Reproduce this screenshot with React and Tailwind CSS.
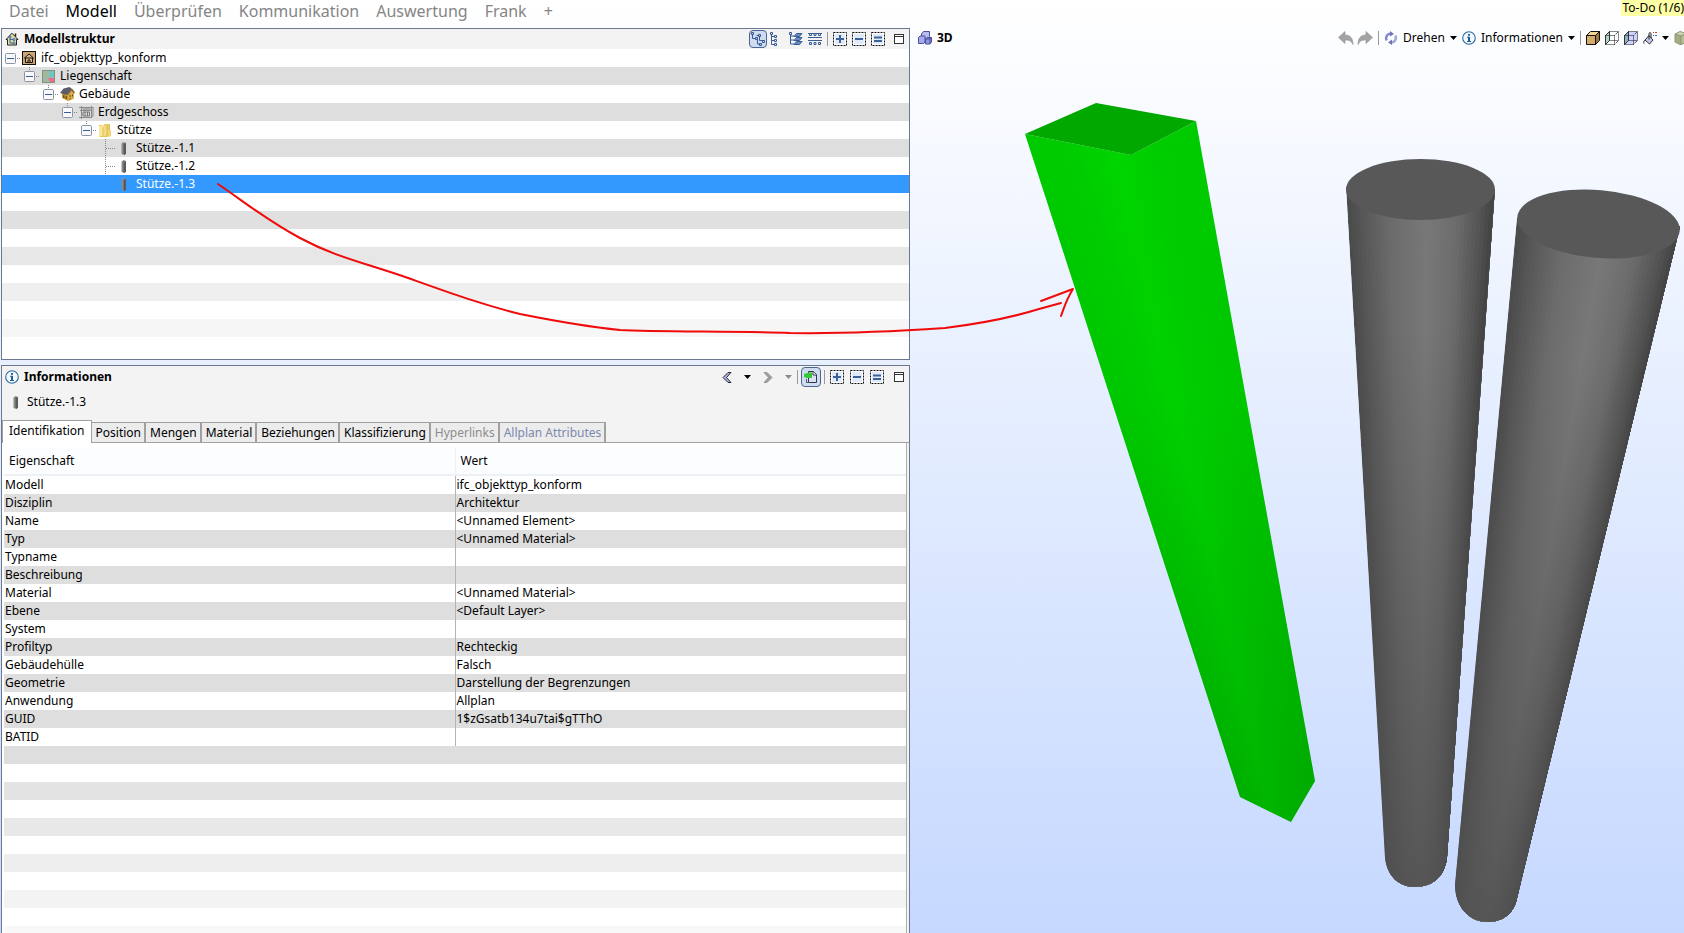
import React from "react";

const dash = { fill: "none", stroke: "#111", strokeWidth: 1, strokeDasharray: "2 1" };

function Expander() {
  return (
    <svg width="11" height="11" viewBox="0 0 11 11">
      <rect x="0.5" y="0.5" width="10" height="10" rx="1" fill="#f8f9fc" stroke="#8b93a0" />
      <path d="M2 5.5h7" stroke="#3a5a9c" />
    </svg>
  );
}

function HouseTreeIcon() {
  return (
    <svg width="14" height="14" viewBox="0 0 14 14">
      <path d="M1 7.5 7 1.2l6 6.3h-1.5V13h-9V7.500z" fill="#dfe0a0" stroke="#222" />
      <path d="M10.500 1.500v3" stroke="#222" strokeWidth="1.500" />
      <path d="M5 5v6h3M5 7.500h3" fill="none" stroke="#3d5f9c" />
      <path d="M4 4h2v2H4zM8 6.500h2v2H8zM8 10h2v2H8z" fill="#8fa6d6" stroke="#3d5f9c" strokeWidth="0.600" />
    </svg>
  );
}

function ProjectIcon() {
  return (
    <svg width="14" height="14" viewBox="0 0 14 14">
      <rect x="0.500" y="0.500" width="13" height="13" fill="#c9a574" stroke="#17120c" />
      <path d="M2.500 7 7 3l4.500 4H10.500v4.500h-7V7z" fill="#d8b98b" stroke="#17120c" />
      <path d="M3.500 7h7M6 11.500V9h2v2.500" fill="none" stroke="#17120c" />
    </svg>
  );
}

function SiteIcon() {
  return (
    <svg width="13" height="13" viewBox="0 0 13 13">
      <rect x="0.500" y="0.500" width="12" height="12" fill="#9fb99b" stroke="#858f86" />
      <rect x="7" y="1" width="5" height="6" fill="#6dc6c2" />
      <path d="M6 8h6v4H8z" fill="#f06c8c" />
      <path d="M1 9h5l2 3" fill="none" stroke="#aab" strokeWidth="0.800" />
    </svg>
  );
}

function BuildingIcon() {
  return (
    <svg width="15" height="14" viewBox="0 0 15 14">
      <path d="M2 5v6l6 3 6-2.500V6l-3-4z" fill="#c79a36" />
      <path d="M8 14V7l3-4 3 3v5.500z" fill="#dcae4c" />
      <path d="M0 6 3.500 1.500 9.500 0l2.500 2-5.500 6z" fill="#5d5b68" />
      <path d="M12 1.500 15 5.500l-1 1-2.500-3L8 8l-1-.5z" fill="#77603a" />
      <path d="M3 8v2.500l1.500.7V8.600zM5.500 9v2.500l1.500.7V9.600zM9.500 8h1.200v2H9.500zM12 7.500h1v2h-1zM9.500 11h1.200v1.500H9.500z" fill="#6d4f1c" />
    </svg>
  );
}

function StoreyIcon() {
  return (
    <svg width="15" height="13" viewBox="0 0 15 13">
      <path d="M0 1.500h14M1 4.500h12M2.500 0v13M12.500 0v12M0 11.500h12l2-1.500V1" fill="none" stroke="#8b8b8b" />
      <path d="M4 6h6.500v4H4zM6 6v4M8.500 6v4M3.500 3h8" fill="none" stroke="#777" />
    </svg>
  );
}

function FolderIcon() {
  return (
    <svg width="14" height="15" viewBox="0 0 14 15">
      <path d="M1 2h5l1-1h5v12l-2 1H1z" fill="#e5c85c" />
      <path d="M1 3l5-1v10l-5 2z" fill="#f8e69c" />
      <path d="M5 4l4-2v10l-4 2z" fill="#f4dc82" />
      <path d="M9 7h4v6l-4 1z" fill="#f2d56e" />
      <path d="M5 4v10M9 3v10" stroke="#d4b24a" strokeWidth="0.700" />
    </svg>
  );
}

function ColumnIcon() {
  return (
    <svg width="6" height="13" viewBox="0 0 6 13">
      <path d="M0.500 1.500 2.500 0 5 1v10.500L3.500 13 .5 12z" fill="#8a8a8a" />
      <path d="M2.500 2l2.500-1v10.500L3.500 13l-1-1z" fill="#5a5a5a" />
    </svg>
  );
}

function InfoIcon() {
  return (
    <svg width="14" height="14" viewBox="0 0 14 14">
      <circle cx="7" cy="7" r="6.300" fill="#f3f8fc" stroke="#2a6a9c" strokeWidth="1.100" />
      <path d="M6 3h2v1.700H6zM5 5.700h3V10h1v1H5v-1h1V6.700H5z" fill="#1c5f9a" />
    </svg>
  );
}

function HierarchyIcon() {
  return (
    <svg width="16" height="16" viewBox="0 0 16 16">
      <path d="M2.500 3v4.500H6M6.500 4.500h3M7.500 8v5h3M9.500 6v3.500H13" fill="none" stroke="#3a5c96" />
      <path d="M1.500 1.500h2v2h-2zM5.500 6.500h2v2h-2zM8.500 3.500h2v2h-2zM12.500 9.500h2v2h-2zM9.500 12.500h2v2h-2z" fill="#b9c9e8" stroke="#3a5c96" />
    </svg>
  );
}

function TreeListIcon() {
  return (
    <svg width="8" height="14" viewBox="0 0 8 14">
      <path d="M1.500 2v10.500H5M1.500 4.500H5M1.500 8.500H5" fill="none" stroke="#3a5c96" />
      <path d="M.5.5h2v2h-2zM4.500 3.500h2v2h-2zM4.500 7.500h2v2h-2zM4.500 11.500h2v2h-2z" fill="#e6ecf8" stroke="#3a5c96" />
    </svg>
  );
}

function LayersIcon() {
  return (
    <svg width="14" height="14" viewBox="0 0 14 14">
      <path d="M1.500 1v11H5M1.500 4H5M1.500 8H5" fill="none" stroke="#3a5c96" />
      <path d="M5 4.500 7.500 1.500h5.500L10.500 4.500zM5 8.500l2.500-3h5.500l-2.500 3zM5 12.500l2.500-3h5.500l-2.500 3z" fill="#6f8bc0" stroke="#3a5c96" />
      <path d="M.5.5h2v2h-2z" fill="#e6ecf8" stroke="#3a5c96" />
    </svg>
  );
}

function StoreysIcon() {
  return (
    <svg width="14" height="14" viewBox="0 0 14 14">
      <path d="M0 1.500h14M0 5.500h14M0 8.500h14" stroke="#3a5c96" />
      <path d="M1.500 1.500h2v2h-2zM6 1.500h2v2H6zM10.500 1.500h2v2h-2zM1.500 10.500h2v2h-2zM6 10.500h2v2H6zM10.500 10.500h2v2h-2z" fill="#dfe7f6" stroke="#3a5c96" />
    </svg>
  );
}

function BoxIcon({ kind }) {
  const d = { plus: "M3 7h8M7 3v8", minus: "M3 7h8", equals: "M3 5.500h8M3 9h8" }[kind];
  return (
    <svg width="14" height="14" viewBox="0 0 14 14">
      <rect x="0.500" y="0.500" width="13" height="13" {...dash} fill="#fff" />
      <rect x="2" y="2" width="10" height="10" fill="#e0eafa" />
      <path d={d} stroke="#3a6298" strokeWidth="2" />
    </svg>
  );
}

function WindowIcon() {
  return (
    <svg width="10" height="10" viewBox="0 0 10 10">
      <rect x="0.500" y="0.500" width="9" height="9" fill="#fff" stroke="#333" />
      <path d="M0 2.500h10" stroke="#333" />
    </svg>
  );
}

function Caret() {
  return (
    <svg width="7" height="4" viewBox="0 0 7 4">
      <path d="M0 0h7L3.500 4z" fill="currentColor" />
    </svg>
  );
}

function Chevron({ flip, dark }) {
  return (
    <svg width="10" height="13" viewBox="0 0 10 13">
      <path
        d={flip ? "M1 1.500h3l5 5-5 5H1l4.500-5z" : "M9 1.500H6l-5 5 5 5h3l-4.500-5z"}
        fill={dark ? "#a9b0dc" : "#9b9b9b"}
        stroke={dark ? "#2b2d3c" : "#9b9b9b"}
      />
    </svg>
  );
}

function LinkPageIcon() {
  return (
    <svg width="14" height="14" viewBox="0 0 14 14">
      <path d="M4.500 1.500h5l3 3v8h-8z" fill="#dcdff2" stroke="#33364a" />
      <path d="M9 1.500V5h3.500" fill="#fff" stroke="#33364a" />
      <path d="M2.500 9v3.500H5" fill="none" stroke="#55586c" />
      <path d="M0 4 5 2.500h3V8H2.500L0 7z" fill="#37c837" />
    </svg>
  );
}

function CubesIcon() {
  return (
    <svg width="14" height="14" viewBox="0 0 14 14">
      <path d="M3.500 3 5.500.5h6v5L9.500 8h-6z" fill="#b9bdf0" stroke="#4a4f9c" />
      <path d="M.5 6.500 2 5h5v6l-1.500 1.500h-5z" fill="#a5aae8" stroke="#4a4f9c" />
      <path d="M7.500 8 9 6.500h4.500V11L12 13H7.500z" fill="#8f95dd" stroke="#4a4f9c" />
      <path d="M7.500 8H12v5M12 8l1.500-1.500" fill="none" stroke="#4a4f9c" />
    </svg>
  );
}

function UndoIcon({ flip }) {
  return (
    <svg width="16" height="14" viewBox="0 0 16 14">
      <path
        d={flip ? "M9 .5v3.500C4 4 1 7 1 13.500c2-4 4.500-4.500 8-4.500v3.500l6.500-6z" : "M7 .5v3.500c5 0 8 3 8 9.500-2-4-4.500-4.500-8-4.500v3.500L.5 6.500z"}
        fill="#a3a3a3"
        stroke="#8f8f8f"
        strokeWidth="0.600"
      />
    </svg>
  );
}

function RotateIcon() {
  return (
    <svg width="14" height="14" viewBox="0 0 14 14">
      <path d="M2.500 9.500A5 5 0 0 1 6.500 2.500" fill="none" stroke="#8286c8" strokeWidth="2.500" />
      <path d="M6 0l4 3-4 2.500z" fill="#6f73bb" />
      <path d="M11.500 4.500a5 5 0 0 1-4 7" fill="none" stroke="#a3a6de" strokeWidth="2.500" />
      <path d="M8 14l-4-2.500L8 8.500z" fill="#6f73bb" />
    </svg>
  );
}

function CubeIcon({ look }) {
  const face = { solid: "#d4ac68", wire: "#ffffff", glass: "#cdd2ff", faded: "#b5bf98" }[look];
  const side = { solid: "#9c7a40", wire: "#b4d4c8", glass: "#8fb4c4", faded: "#a2ad83" }[look];
  const stroke = look === "faded" ? "#8f9a78" : "#111";
  if (look === "solid") {
    return (
      <svg width="14" height="14" viewBox="0 0 14 14">
        <path d="M.5 4.500h9v9h-9z" fill={face} stroke={stroke} />
        <path d="M.5 4.500l4-4h9l-4 4z" fill="#f3d692" stroke={stroke} />
        <path d="M9.500 4.500l4-4v9l-4 4z" fill={side} stroke={stroke} />
      </svg>
    );
  }
  if (look === "faded") {
    return (
      <svg width="14" height="14" viewBox="0 0 14 14">
        <path d="M1 3l6 2v9l-6-3z" fill={side} stroke={stroke} />
        <path d="M1 3l5-2.500 7 2L7 5z" fill="#ccd4b4" stroke={stroke} />
        <path d="M7 5l6-2.500v8L7 14z" fill={face} stroke={stroke} />
      </svg>
    );
  }
  return (
    <svg width="14" height="14" viewBox="0 0 14 14">
      <path d="M4.500.5h9v9l-4 4h-9v-9z" fill={face} />
      <path d="M.5 4.500l4-4v9l-4 4z" fill={side} stroke="#333" />
      <path d="M4.500.5h9v9h-9M.5 4.500h9v9h-9M9.500 4.500l4-4M9.500 13.500l4-4" fill="none" stroke={stroke} strokeDasharray="1 1" />
    </svg>
  );
}

function BucketIcon() {
  return (
    <svg width="14" height="14" viewBox="0 0 14 14">
      <path d="M2 9l4-4.500L10 9l-3.500 4z" fill="#c3c6ee" stroke="#333" />
      <path d="M6 8.500V3C6 1 8 1 8 3v4M2 9c-1 .5-1.500 2-1 3.500" fill="none" stroke="#222" />
      <path d="M10 1.500h1M12 1.500h2" stroke="#d33" />
      <path d="M10 4.500h1M12 4.500h2" stroke="#36c" />
    </svg>
  );
}

function Divider() {
  return <span className="h-3.5 w-px bg-[#9a9a9a]" />;
}

function IconButton({ label, className = "", children }) {
  return (
    <button type="button" aria-label={label} className={"flex shrink-0 items-center justify-center " + className}>
      {children}
    </button>
  );
}

const pressed = "rounded border border-[#4a6590] bg-[#cfdcf0]";

function ExpandButtons() {
  return (
    <>
      <IconButton label="Alles aufklappen"><BoxIcon kind="plus" /></IconButton>
      <IconButton label="Alles zuklappen"><BoxIcon kind="minus" /></IconButton>
      <IconButton label="Auswahl zeigen"><BoxIcon kind="equals" /></IconButton>
    </>
  );
}

const treeRows = [
  { level: 0, text: "ifc_objekttyp_konform", icon: <ProjectIcon /> },
  { level: 1, text: "Liegenschaft", icon: <SiteIcon /> },
  { level: 2, text: "Gebäude", icon: <BuildingIcon /> },
  { level: 3, text: "Erdgeschoss", icon: <StoreyIcon /> },
  { level: 4, text: "Stütze", icon: <FolderIcon /> },
  { level: 5, text: "Stütze.-1.1", leaf: true, icon: <ColumnIcon /> },
  { level: 5, text: "Stütze.-1.2", leaf: true, icon: <ColumnIcon /> },
  { level: 5, text: "Stütze.-1.3", leaf: true, selected: true, icon: <ColumnIcon /> },
];

function TreeRow({ row, index }) {
  const tone = row.selected ? "bg-[#3399ff] text-white" : index % 2 ? "bg-[#dedede]" : "bg-white";
  return (
    <li
      role="treeitem"
      aria-selected={!!row.selected}
      className={"flex h-[18px] items-center " + tone}
      style={{ paddingLeft: 3 + row.level * 19 }}
    >
      <span className="grid h-[18px] w-4 shrink-0 grid-cols-1 grid-rows-1 items-center">
        {!row.selected && (
          <svg width="16" height="18" viewBox="0 0 16 18" className="col-start-1 row-start-1">
            <path
              d={row.leaf ? "M5.500 0v18M6 9.500h10" : row.level ? "M5.500 0v4M12 9.500h4" : "M12 9.500h4"}
              fill="none"
              stroke="#888"
              strokeDasharray="1 1"
            />
          </svg>
        )}
        {!row.leaf && (
          <button type="button" aria-label={row.text + " zuklappen"} className="col-start-1 row-start-1">
            <Expander />
          </button>
        )}
      </span>
      <span className="flex w-4 shrink-0 justify-center">{row.icon}</span>
      <span className="pl-1">{row.text}</span>
    </li>
  );
}

function Fade({ tones }) {
  return (
    <div aria-hidden="true">
      {tones.map((tone, i) => (
        <div key={i} className={"h-[18px] " + tone} />
      ))}
    </div>
  );
}

const tabs = [
  ["Position", "text-black"],
  ["Mengen", "text-black"],
  ["Material", "text-black"],
  ["Beziehungen", "text-black"],
  ["Klassifizierung", "text-black"],
  ["Hyperlinks", "text-[#8c8c8c]"],
  ["Allplan Attributes", "text-[#7c88ac]"],
];

const properties = [
  ["Modell", "ifc_objekttyp_konform"],
  ["Disziplin", "Architektur"],
  ["Name", "<Unnamed Element>"],
  ["Typ", "<Unnamed Material>"],
  ["Typname", ""],
  ["Beschreibung", ""],
  ["Material", "<Unnamed Material>"],
  ["Ebene", "<Default Layer>"],
  ["System", ""],
  ["Profiltyp", "Rechteckig"],
  ["Gebäudehülle", "Falsch"],
  ["Geometrie", "Darstellung der Begrenzungen"],
  ["Anwendung", "Allplan"],
  ["GUID", "1$zGsatb134u7tai$gTThO"],
  ["BATID", ""],
];

function StructurePanel() {
  return (
    <section className="shrink-0 border border-[#6b7890] bg-white pb-[22px]">
      <header className="flex h-5 items-center bg-[#f3f3f3] pr-[5px] pl-[3px]">
        <HouseTreeIcon />
        <h2 className="flex-1 pl-[5px] font-bold">Modellstruktur</h2>
        <div className="flex items-center gap-[5px]">
          <IconButton label="Hierarchie" className={"h-[18px] w-[18px] " + pressed}><HierarchyIcon /></IconButton>
          <IconButton label="Liste" className="-ml-0.5 mr-1.5"><TreeListIcon /></IconButton>
          <IconButton label="Layer"><LayersIcon /></IconButton>
          <IconButton label="Geschosse"><StoreysIcon /></IconButton>
          <Divider />
          <ExpandButtons />
          <IconButton label="Maximieren" className="ml-1"><WindowIcon /></IconButton>
        </div>
      </header>
      <ul role="tree">
        {treeRows.map((row, i) => (
          <TreeRow key={row.text} row={row} index={i} />
        ))}
      </ul>
      <Fade
        tones={["bg-white", "bg-[#e0e0e0]", "bg-white", "bg-[#e7e7e7]", "bg-white", "bg-[#efefef]", "bg-white", "bg-[#f6f6f6]"]}
      />
    </section>
  );
}

function InfoPanel() {
  return (
    <section className="flex min-h-0 flex-1 flex-col overflow-hidden border border-b-0 border-[#6b7890] bg-[#f3f3f3]">
      <header className="flex h-[22px] shrink-0 items-center pr-[5px] pl-[3px]">
        <InfoIcon />
        <h2 className="flex-1 pl-[5px] font-bold">Informationen</h2>
        <div className="flex items-center">
          <div className="flex items-center gap-3">
            <IconButton label="Zurück"><Chevron dark /></IconButton>
            <IconButton label="Verlauf zurück" className="text-black"><Caret /></IconButton>
            <IconButton label="Vorwärts"><Chevron flip /></IconButton>
            <IconButton label="Verlauf vorwärts" className="text-[#8c8c8c]"><Caret /></IconButton>
          </div>
          <div className="flex items-center gap-[3px] px-[5px]">
            <Divider />
            <IconButton label="Auswahl verknüpfen" className={"h-5 w-5 " + pressed}><LinkPageIcon /></IconButton>
            <Divider />
          </div>
          <div className="flex items-center gap-1.5">
            <ExpandButtons />
            <IconButton label="Maximieren" className="ml-1"><WindowIcon /></IconButton>
          </div>
        </div>
      </header>
      <div className="flex h-8 shrink-0 items-center gap-2 pb-1 pl-[11px]">
        <ColumnIcon />
        <span>Stütze.-1.3</span>
      </div>
      <div role="tablist" className="flex shrink-0 items-end border-b border-[#a0a0a0]">
        <button
          type="button"
          role="tab"
          aria-selected="true"
          className="-mb-px h-[23px] border border-b-0 border-[#a0a0a0] bg-white px-1.5 pb-0.5"
        >
          Identifikation
        </button>
        {tabs.map(([name, tone]) => (
          <button
            key={name}
            type="button"
            role="tab"
            aria-selected="false"
            className={"h-5 border-t border-r-2 border-[#a0a0a0] bg-[#ececec] pr-[3px] pl-1 " + tone}
          >
            {name}
          </button>
        ))}
      </div>
      <div className="mr-0.5 flex-1 border-r border-[#a9b0aa] bg-white pt-1 pl-0.5">
        <table className="w-full table-fixed border-collapse text-left">
          <thead>
            <tr className="h-7 border-b-2 border-[#edf1f5] bg-[#fcfdff]">
              <th className="w-1/2 border-r border-[#edf1f5] p-0 pl-[5px] font-normal">Eigenschaft</th>
              <th className="p-0 pl-[5px] font-normal">Wert</th>
            </tr>
          </thead>
          <tbody>
            {properties.map(([name, value], i) => (
              <tr key={name} className={i % 2 ? "h-[18px] bg-[#dedede]" : "h-[18px] bg-white"}>
                <td className="border-r border-[#b4b4b4] p-0 pl-px">{name}</td>
                <td className="p-0 pl-px">{value}</td>
              </tr>
            ))}
          </tbody>
        </table>
        <Fade
          tones={["bg-[#dedede]", "bg-white", "bg-[#e3e3e3]", "bg-white", "bg-[#e8e8e8]", "bg-white", "bg-[#eeeeee]", "bg-white", "bg-[#f3f3f3]", "bg-white", "bg-[#f8f8f8]"]}
        />
      </div>
    </section>
  );
}

const tones = [
  [0, 74],
  [0.1, 86],
  [0.3, 108],
  [0.55, 120],
  [0.75, 108],
  [0.92, 82],
  [1, 66],
];

function toneAt(u) {
  const next = tones.findIndex(([stop]) => stop >= u);
  if (next <= 0) return tones[0][1];
  const [a, from] = tones[next - 1];
  const [b, to] = tones[next];
  return Math.round(from + ((u - a) / (b - a)) * (to - from));
}

function Cylinder({ id, outline, top, bottom, cap }) {
  const steps = 36;
  const lerp = ([[x1, y1], [x2, y2]], u) => [x1 + (x2 - x1) * u, y1 + (y2 - y1) * u];
  return (
    <g>
      <clipPath id={id}>
        <path d={outline} />
      </clipPath>
      <g clipPath={"url(#" + id + ")"}>
        {Array.from({ length: steps }, (_, i) => {
          const v = toneAt((i + 0.5) / steps);
          const [tx, ty] = lerp(top, i / steps);
          const [bx, by] = lerp(bottom, i / steps);
          return (
            <path
              key={i}
              d={`M${tx} ${ty} L${top[1][0]} ${top[1][1]} L${bottom[1][0]} ${bottom[1][1]} L${bx} ${by}z`}
              fill={`rgb(${v} ${v} ${v})`}
            />
          );
        })}
      </g>
      <path d={outline} fill="url(#shade)" />
      <ellipse cx={cap.cx} cy={cap.cy} rx={cap.rx} ry={cap.ry} transform={`rotate(${cap.tilt} ${cap.cx} ${cap.cy})`} fill="#585858" />
    </g>
  );
}

function Scene() {
  return (
    <svg
      className="absolute inset-0 h-full w-full"
      viewBox="910 0 774 933"
      preserveAspectRatio="none"
      role="img"
      aria-label="3D-Ansicht der Stützen"
    >
      <defs>
        <linearGradient id="green" x1="0" y1="0" x2="0" y2="1">
          <stop offset="0" stopColor="#00d200" />
          <stop offset="0.400" stopColor="#00cc00" />
          <stop offset="1" stopColor="#00a600" />
        </linearGradient>
        <linearGradient id="glow" gradientUnits="userSpaceOnUse" x1="1070" y1="340" x2="1240" y2="300">
          <stop offset="0" stopColor="#009000" stopOpacity="0.120" />
          <stop offset="0.500" stopColor="#00e000" stopOpacity="0.250" />
          <stop offset="1" stopColor="#009000" stopOpacity="0.100" />
        </linearGradient>
        <linearGradient id="shade" x1="0" y1="0" x2="0" y2="1">
          <stop offset="0.200" stopColor="#505050" stopOpacity="0" />
          <stop offset="1" stopColor="#505050" stopOpacity="0.850" />
        </linearGradient>
      </defs>
      <path d="M1025 134 1131 155 1196 121 1315 781 1291 822 1240 797z" fill="url(#green)" />
      <path d="M1025 134 1131 155 1196 121 1315 781 1291 822 1240 797z" fill="url(#glow)" />
      <path d="M1025 134 1096 103 1196 121 1131 155z" fill="#00a800" />
      <Cylinder
        id="column-1"
        outline="M1346 187 1385 858C1387 875 1398 887 1415 887 1433 887 1445 876 1447 857L1495 190z"
        top={[[1346, 187], [1495, 187]]}
        bottom={[[1387, 892], [1445, 892]]}
        cap={{ cx: 1420.5, cy: 189.5, rx: 74.5, ry: 30.5, tilt: 0 }}
      />
      <Cylinder
        id="column-2"
        outline="M1517 218 1455 885C1455 904 1467 922 1488 922 1504 922 1513 912 1516 902L1680 226z"
        top={[[1517, 216], [1681, 226]]}
        bottom={[[1451, 924], [1511, 928]]}
        cap={{ cx: 1598.5, cy: 224, rx: 81.5, ry: 34, tilt: 5 }}
      />
    </svg>
  );
}

function ViewToolbar() {
  return (
    <header className="relative flex h-7 items-center overflow-hidden pl-2">
      <CubesIcon />
      <h2 className="flex-1 pl-[5px] font-bold">3D</h2>
      <div className="-mr-1 flex shrink-0 items-center gap-[5px]">
        <IconButton label="Rückgängig"><UndoIcon /></IconButton>
        <IconButton label="Wiederholen" className="-ml-0.5"><UndoIcon flip /></IconButton>
        <Divider />
        <button type="button" className="flex items-center gap-[5px]">
          <RotateIcon />
          Drehen
          <Caret />
        </button>
        <button type="button" className="flex items-center gap-[5px]">
          <InfoIcon />
          Informationen
          <Caret />
        </button>
        <Divider />
        <IconButton label="Schattiert"><CubeIcon look="solid" /></IconButton>
        <IconButton label="Drahtmodell"><CubeIcon look="wire" /></IconButton>
        <IconButton label="Transparent"><CubeIcon look="glass" /></IconButton>
        <IconButton label="Farbe"><BucketIcon /></IconButton>
        <IconButton label="Farboptionen"><Caret /></IconButton>
        <IconButton label="Schnitt"><CubeIcon look="faded" /></IconButton>
      </div>
    </header>
  );
}

function Annotation() {
  return (
    <svg
      className="pointer-events-none absolute inset-0 h-full w-full"
      viewBox="0 0 1684 933"
      preserveAspectRatio="none"
      aria-hidden="true"
    >
      <g fill="none" stroke="#f00a0a" strokeWidth="2" strokeLinecap="round" strokeLinejoin="round">
        <path d="M218 184C250 206 268 221 300 238 335 257 365 263 408 278 450 293 480 304 520 314 560 322 590 327 620 330 660 332 740 331 790 333 850 334 900 331 945 328 985 323 1010 318 1039 309L1061 303" />
        <path d="M1041 301 1073 289C1066 300 1064 308 1061 316" />
      </g>
    </svg>
  );
}

const menu = ["Datei", "Modell", "Überprüfen", "Kommunikation", "Auswertung", "Frank"];

export default function App() {
  return (
    <div className="relative flex h-screen flex-col overflow-hidden bg-linear-to-b from-white to-[#c5d8ff] font-['Noto_Sans',sans-serif] text-[12px] leading-[18px] text-black">
      <div className="grid min-h-0 flex-1 grid-cols-[455fr_387fr]">
        <div className="flex min-h-0 min-w-0 flex-col pl-px">
          <nav className="flex h-7 shrink-0 items-center gap-[17px] pb-1.5 pl-2 text-[16px] leading-[22px] text-[#858585]">
            {menu.map((item) => (
              <button key={item} type="button" className={item === "Modell" ? "text-black" : ""}>
                {item}
              </button>
            ))}
            <button type="button" aria-label="Neuer Reiter">+</button>
          </nav>
          <div className="flex min-h-0 flex-1 flex-col gap-[5px]">
            <StructurePanel />
            <InfoPanel />
          </div>
        </div>
        <main className="relative min-w-0 overflow-hidden">
          <Scene />
          <div className="relative flex h-6 items-start justify-end">
            <button type="button" className="h-4 bg-[#ffffa6] pl-0.5 leading-4">To-Do (1/6)</button>
          </div>
          <ViewToolbar />
        </main>
      </div>
      <Annotation />
    </div>
  );
}
